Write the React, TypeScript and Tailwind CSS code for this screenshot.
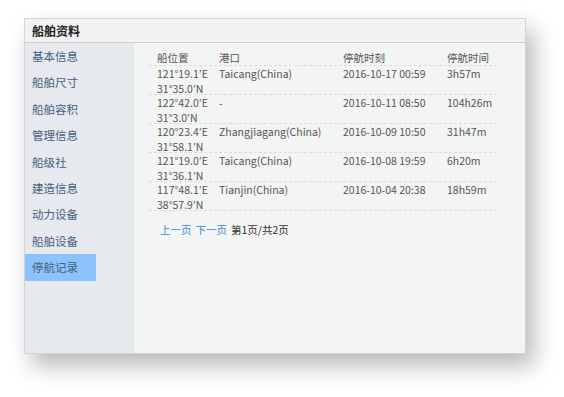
const menu = ["基本信息", "船舶尺寸", "船舶容积", "管理信息", "船级社", "建造信息", "动力设备", "船舶设备", "停航记录"];

const rows = [
  { lon: "121°19.1′E", lat: "31°35.0′N", port: "Taicang(China)", time: "2016-10-17 00:59", dur: "3h57m" },
  { lon: "122°42.0′E", lat: "31°3.0′N", port: "-", time: "2016-10-11 08:50", dur: "104h26m" },
  { lon: "120°23.4′E", lat: "31°58.1′N", port: "Zhangjiagang(China)", time: "2016-10-09 10:50", dur: "31h47m" },
  { lon: "121°19.0′E", lat: "31°36.1′N", port: "Taicang(China)", time: "2016-10-08 19:59", dur: "6h20m" },
  { lon: "117°48.1′E", lat: "38°57.9′N", port: "Tianjin(China)", time: "2016-10-04 20:38", dur: "18h59m" },
];

const cols = "grid grid-cols-[62px_124px_104px_58px]";

export default function App() {
  return (
    <div
      className="h-[397px] w-[564px] bg-white pl-[24px] pt-[18px]"
      style={{ fontFamily: '"Noto Sans CJK SC", "Noto Sans", sans-serif' }}
    >
      <div className="flex h-[336px] w-[502px] flex-col border border-[#d4d4d4] bg-[#f3f4f4] shadow-[8px_12px_22px_rgba(0,0,0,0.28)]">
        <div className="flex h-[24px] items-center border-b border-[#cfcfcf] bg-[#f2f2f2] pl-[7px] text-[12px] font-bold text-[#222]">
          船舶资料
        </div>
        <div className="flex flex-1">
          <div className="w-[109px] bg-[#e6e9ee]">
            {menu.map((m, i) => (
              <div
                key={m}
                className={
                  "flex h-[26.4px] w-[71px] items-center pl-[7px] pt-[1px] text-[11.5px] text-[#45607e] " +
                  (i === menu.length - 1 ? "bg-[#8cc3fd]" : "")
                }
              >
                {m}
              </div>
            ))}
          </div>
          <div className="flex-1 pl-[15px] pr-[28px] pt-[5px] text-[10.5px] text-[#555]">
            <div className={cols + " h-[18px] items-end border-b border-dashed border-[#dcdcdc] leading-[14px]"}>
              <div className="pl-[8px]">船位置</div>
              <div className="pl-[8px]">港口</div>
              <div className="pl-[8px]">停航时刻</div>
              <div className="pl-[8px]">停航时间</div>
            </div>
            {rows.map((r) => (
              <div key={r.time} className={cols + " h-[29px] border-b border-dashed border-[#dcdcdc] pt-[1px] leading-[14.5px]"}>
                <div className="pl-[8px]">
                  <div>{r.lon}</div>
                  <div>{r.lat}</div>
                </div>
                <div className="pl-[8px]">{r.port}</div>
                <div className="pl-[8px]">{r.time}</div>
                <div className="pl-[8px]">{r.dur}</div>
              </div>
            ))}
            <div className="mt-[11px] flex gap-[4px] pl-[11px] text-[10.5px]">
              <span className="text-[#3b8ad6]">上一页</span>
              <span className="text-[#3b8ad6]">下一页</span>
              <span className="text-[#333]">第1页/共2页</span>
            </div>
          </div>
        </div>
      </div>
    </div>
  );
}
